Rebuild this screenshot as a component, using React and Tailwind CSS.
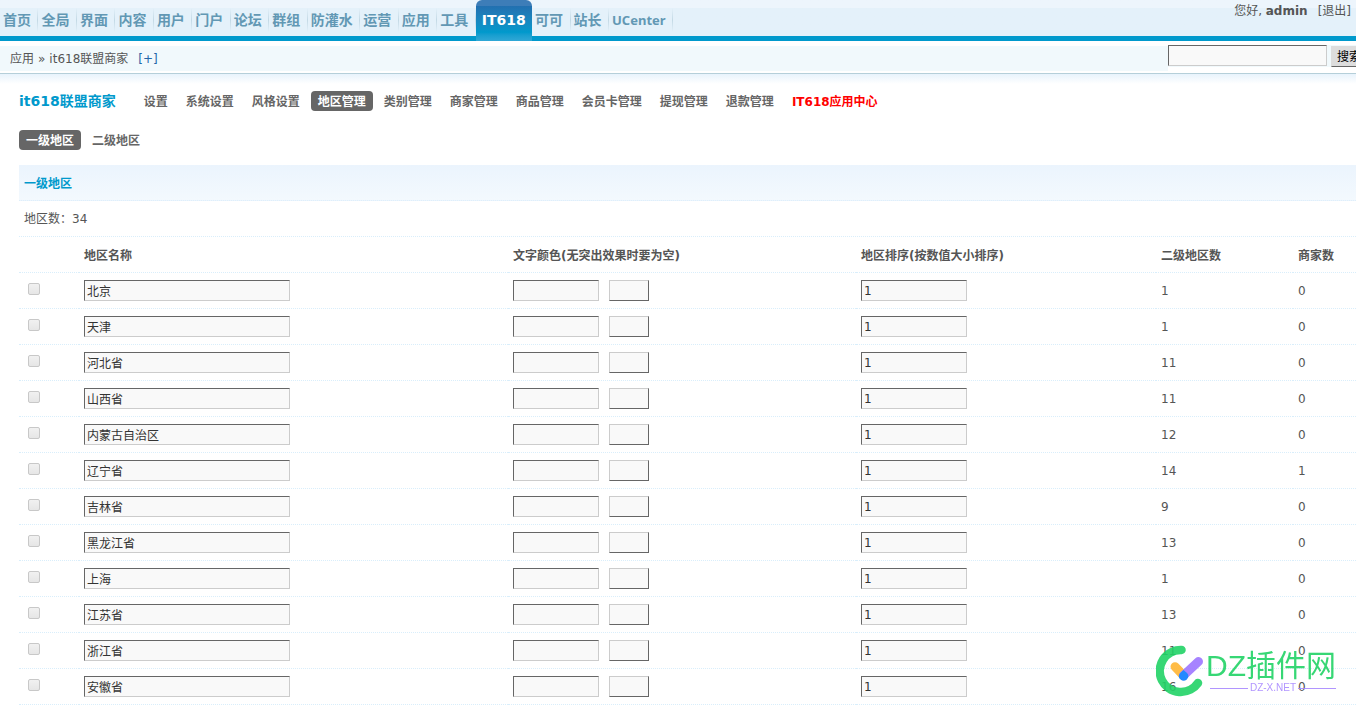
import React, { useState } from 'react';

const topMenu = ['首页', '全局', '界面', '内容', '用户', '门户', '论坛', '群组', '防灌水', '运营', '应用', '工具', 'IT618', '可可', '站长', 'UCenter'];

const pluginMenu = ['设置', '系统设置', '风格设置', '地区管理', '类别管理', '商家管理', '商品管理', '会员卡管理', '提现管理', '退款管理'];

const initialAreas = [
  { id: 1, name: '北京', order: 1, children: 1, shops: 0 },
  { id: 2, name: '天津', order: 1, children: 1, shops: 0 },
  { id: 3, name: '河北省', order: 1, children: 11, shops: 0 },
  { id: 4, name: '山西省', order: 1, children: 11, shops: 0 },
  { id: 5, name: '内蒙古自治区', order: 1, children: 12, shops: 0 },
  { id: 6, name: '辽宁省', order: 1, children: 14, shops: 1 },
  { id: 7, name: '吉林省', order: 1, children: 9, shops: 0 },
  { id: 8, name: '黑龙江省', order: 1, children: 13, shops: 0 },
  { id: 9, name: '上海', order: 1, children: 1, shops: 0 },
  { id: 10, name: '江苏省', order: 1, children: 13, shops: 0 },
  { id: 11, name: '浙江省', order: 1, children: 11, shops: 0 },
  { id: 12, name: '安徽省', order: 1, children: 16, shops: 0 },
];

const inputClass = 'h-[21px] border border-t-[#666] border-l-[#666] border-r-[#ccc] border-b-[#ccc] bg-[#f9f9f9] px-0.5 text-[#333] outline-none';

function Header() {
  return (
    <header className="flex h-[41px] items-start justify-between border-b-5 border-[#0099cc] bg-linear-to-b from-[#edf5fc] from-22% to-[#e4f1fa] to-22%">
      <ul className="flex w-[673px] shrink-0 text-sm font-bold">
        {topMenu.map((item) => {
          const active = item === 'IT618';
          return (
            <li key={item} className="flex h-9 grow items-center">
              <a
                href="#"
                className={
                  active
                    ? 'flex h-[41px] grow items-center justify-center self-start rounded-t-md border-t-6 border-[#3d7db8] bg-linear-to-b from-[#2270b0] via-[#0099cc] via-75% to-[#2fa8d6] px-[5px] pb-2 text-white'
                    : 'grow pt-1 pr-1 pl-[3px] text-[#6298b4]'
                }
              >
                {item === 'UCenter' ? <span className="font-['Noto_Sans',sans-serif] text-[13px]">{item}</span> : item}
              </a>
              {!active && <span className="mt-1 h-6 w-px bg-linear-to-b from-transparent via-[#c3d9e5] to-transparent" />}
            </li>
          );
        })}
      </ul>
      <p className="shrink-0 pr-[5px] leading-[22px]">
        您好, <strong>admin</strong>
        <a href="#" className="ml-2.5">[退出]</a>
      </p>
    </header>
  );
}

function Breadcrumb() {
  return (
    <div className="mt-1 flex h-7 items-start justify-between overflow-hidden">
      <div className="mt-px flex h-[25px] grow items-center bg-[#f1f9fc] pl-2.5">
        <span>应用</span>
        <span className="mx-1">»</span>
        <span>it618联盟商家</span>
        <a href="#" className="ml-2.5 text-[#2366a8]">[+]</a>
      </div>
      <form className="-mr-[11px] flex shrink-0 items-start gap-1 bg-[#f1f9fc]" onSubmit={(e) => e.preventDefault()}>
        <input type="text" aria-label="搜索内容" className={`${inputClass} w-[159px]`} />
        <button type="submit" className="mt-px h-[21px] border border-[#ddd] border-r-[#666] border-b-[#666] bg-[#ddd] px-[5px] leading-4 text-black">
          搜索
        </button>
      </form>
    </div>
  );
}

function Tab({ label, active }) {
  return (
    <a href="#" className={active ? 'block h-5 rounded bg-[#666] px-[7px] leading-[22px] text-white' : 'block h-5 px-[7px] leading-[22px] text-[#666]'}>
      {label}
    </a>
  );
}

function SiteLogo() {
  return (
    <div className="pointer-events-none fixed right-5 bottom-[13px] flex items-center opacity-90">
      <svg width="50" height="54" viewBox="0 0 50 54" fill="none" strokeLinecap="round">
        <path d="M25.5 6 A21 21 0 1 0 42 39" stroke="#22d366" strokeWidth="8.5" />
        <path d="M19 22.7 L27.5 31.5" stroke="#ffb534" strokeWidth="9" />
        <path d="M27.5 31.5 L42.5 17.5" stroke="#9d76ff" strokeWidth="9" />
        <path d="M27.5 26 L31 29 A4.6 4.6 0 1 1 23.8 29.4 Z" fill="#0d7dff" />
      </svg>
      <div className="flex flex-col font-['Liberation_Sans','Noto_Sans_CJK_SC',sans-serif]">
        <span className="h-[34px] text-[30px] leading-9 text-[#22d366]">DZ插件网</span>
        <span className="ml-1 flex h-3 items-center gap-0.5 text-[10px] leading-3 text-[#a98aff]">
          <span className="h-px grow bg-[#a98aff]" />
          DZ-X.NET
          <span className="h-px grow bg-[#a98aff]" />
        </span>
      </div>
    </div>
  );
}

export default function App() {
  const [areas, setAreas] = useState(initialAreas);

  const update = (id, field, value) => {
    setAreas(areas.map((a) => (a.id === id ? { ...a, [field]: value } : a)));
  };

  return (
    <div className="overflow-x-hidden bg-white font-['DejaVu_Sans','Noto_Sans_CJK_SC',sans-serif] text-xs text-[#555]">
      <Header />
      <Breadcrumb />

      <main className="border-t border-[#b5cfd9]">
        <div className="h-2.5 bg-linear-to-b from-[#e8f3fc] to-white" />

        <div className="pl-[19px]">
          {/* Plugin menu */}
          <nav className="mt-[7px] flex items-center font-bold">
            <h3 className="mr-[21px] text-sm leading-5 text-[#0099cc]">it618联盟商家</h3>
            <div className="flex gap-1">
              {pluginMenu.map((item) => (
                <Tab key={item} label={item} active={item === '地区管理'} />
              ))}
              <a href="#" className="block h-5 px-[7px] leading-[22px] text-[#ff0000]">IT618应用中心</a>
            </div>
          </nav>
          <nav className="mt-[19px] flex gap-1 font-bold">
            <Tab label="一级地区" active />
            <Tab label="二级地区" />
          </nav>

          {/* Area list */}
          <h4 className="mt-[15px] h-9 border-b border-dotted border-[#deeffb] bg-linear-to-b from-[#ebf4fd] to-[#f3f9fe] pl-[5px] font-bold leading-[38px] text-[#0099cc]">一级地区</h4>
          <p className="h-9 border-b border-dotted border-[#d9eefb] pl-[5px] leading-9">地区数：34</p>
          <table className="w-full table-fixed border-separate border-spacing-0 text-left">
            <colgroup>
              <col className="w-[60px]" />
              <col className="w-[429px]" />
              <col className="w-[348px]" />
              <col className="w-[300px]" />
              <col className="w-[137px]" />
              <col />
            </colgroup>
            <thead>
              <tr className="h-9 [&>th]:border-b [&>th]:border-dotted [&>th]:border-[#d9eefb] [&>th]:p-0 [&>th]:pt-0.5 [&>th]:pl-[5px]">
                <th></th>
                <th>地区名称</th>
                <th>文字颜色(无突出效果时要为空)</th>
                <th>地区排序(按数值大小排序)</th>
                <th>二级地区数</th>
                <th>商家数</th>
              </tr>
            </thead>
            <tbody>
              {areas.map((area) => (
                <tr key={area.id} className="h-9 [&>td]:border-b [&>td]:border-dotted [&>td]:border-[#d9eefb] [&>td]:p-0 [&>td]:pl-[5px]">
                  <td className="align-top">
                    <input
                      type="checkbox"
                      disabled
                      aria-label={`选择${area.name}`}
                      className="mt-2.5 ml-1 block size-3 appearance-none rounded-xs border border-[#c8c8c8] bg-linear-to-b from-[#f1f1f1] to-[#e6e6e6]"
                    />
                  </td>
                  <td>
                    <input
                      type="text"
                      aria-label="地区名称"
                      value={area.name}
                      onChange={(e) => update(area.id, 'name', e.target.value)}
                      className={`${inputClass} block w-[206px]`}
                    />
                  </td>
                  <td>
                    <div className="flex gap-2.5">
                      <input type="text" aria-label="文字颜色" className={`${inputClass} w-[86px]`} />
                      <button type="button" aria-label="选择颜色" className="h-[21px] w-10 border border-t-[#ccc] border-l-[#ccc] border-r-[#666] border-b-[#666] bg-[#f9f9f9]" />
                    </div>
                  </td>
                  <td>
                    <input
                      type="text"
                      aria-label="地区排序"
                      value={area.order}
                      onChange={(e) => update(area.id, 'order', e.target.value)}
                      className={`${inputClass} block w-[106px]`}
                    />
                  </td>
                  <td>{area.children}</td>
                  <td>{area.shops}</td>
                </tr>
              ))}
            </tbody>
          </table>
        </div>
      </main>

      <SiteLogo />
    </div>
  );
}
